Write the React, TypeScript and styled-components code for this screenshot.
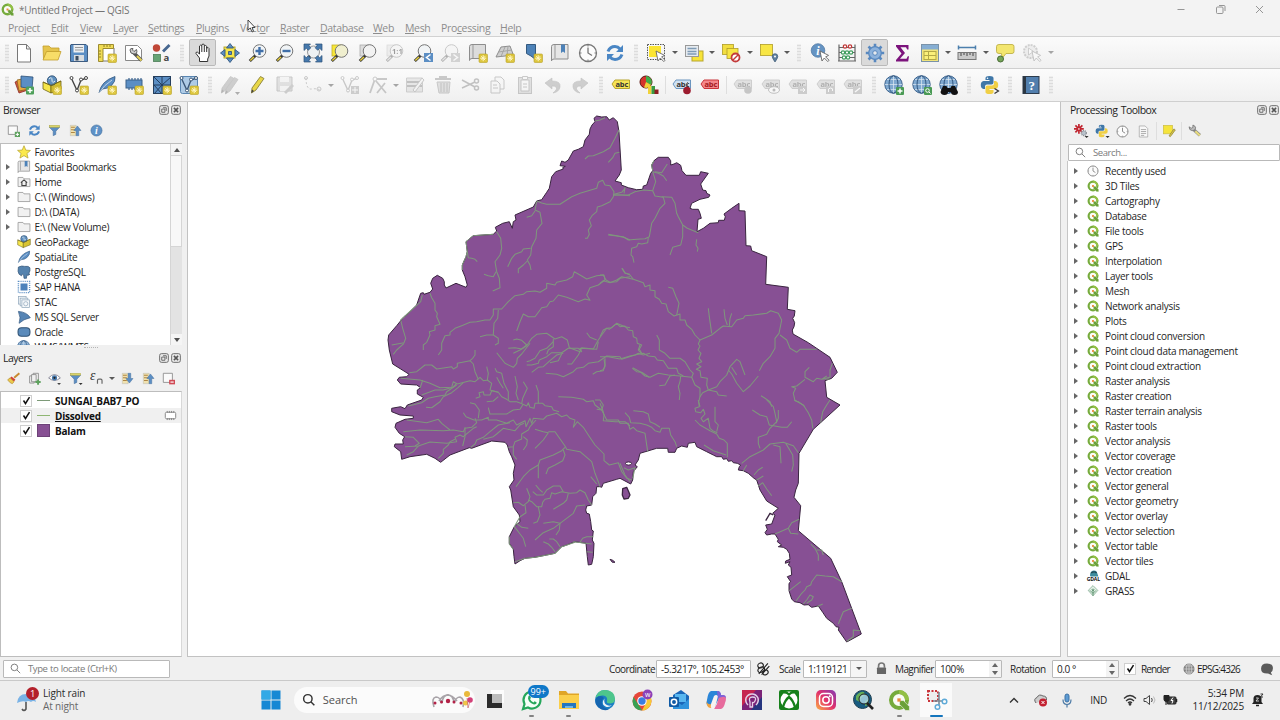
import type { ReactNode } from "react";
import styled, { createGlobalStyle, css } from "styled-components";

const GlobalStyle = createGlobalStyle`
  * {
    box-sizing: border-box;
  }
  body {
    margin: 0;
    overflow: hidden;
    font-family: "Open Sans", "Noto Sans", sans-serif;
    font-size: 10px;
    color: #1e1e1e;
  }
  svg {
    display: block;
    flex: none;
  }
`;

const Screen = styled.div`
  width: 1280px;
  height: 720px;
  display: flex;
  flex-direction: column;
  background-color: #f0f0f0;
  position: relative;
`;

const TitleBar = styled.header`
  height: 19px;
  display: flex;
  align-items: center;
  padding-left: 1px;
  background-color: #f3f3f3;
  color: #747474;
`;

const WindowTitle = styled.span`
  flex: 1;
  margin-left: 5px;
  font-size: 10px;
  letter-spacing: -0.26px;
`;

const WindowButtons = styled.div`
  display: flex;
  gap: 26px;
  padding-right: 14px;
`;

const MenuBar = styled.nav`
  height: 18px;
  display: flex;
  align-items: center;
  padding-left: 8px;
  background-color: #f3f3f3;
  border-bottom: 1px solid #d2d2d2;
  color: #8d8d8d;
`;

const MenuItem = styled.span<{ $width: number }>`
  width: ${(props) => `${props.$width}px`};
  font-size: 10.5px;
  letter-spacing: -0.34px;
  white-space: nowrap;
  u {
    text-underline-offset: 1px;
    text-decoration-thickness: 1px;
  }
`;

const Toolbar = styled.div<{ $height: number }>`
  height: ${(props) => `${props.$height}px`};
  display: flex;
  align-items: center;
  padding-left: 3px;
  background: linear-gradient(#fbfbfb, #f0f0f0);
  border-bottom: 1px solid #cfcfcf;
`;

const Handle = styled.div<{ $width?: number }>`
  width: ${(props) => `${props.$width ?? 13}px`};
  height: 18px;
  flex: none;
  display: flex;
  justify-content: center;
  &::before {
    content: "";
    width: 4px;
    background-image: radial-gradient(#dcdcdc 0.7px, transparent 0.9px);
    background-size: 2px 3px;
  }
`;

const Separator = styled.div<{ $width?: number }>`
  width: ${(props) => `${props.$width ?? 6}px`};
  height: 18px;
  flex: none;
  background: linear-gradient(#dedede, #dedede) center / 1px 100% no-repeat;
`;

const ToolButton = styled.div<{ $pressed?: boolean; $disabled?: boolean }>`
  width: 27.5px;
  height: 27px;
  flex: none;
  display: flex;
  align-items: center;
  justify-content: center;
  ${(props) =>
    props.$pressed &&
    css`
      background-color: #dadada;
      border: 1px solid #b9b9b9;
      border-radius: 2px;
      background-clip: padding-box;
    `}
  ${(props) =>
    props.$disabled &&
    css`
      opacity: 0.36;
      filter: grayscale(1);
    `}
`;

const DropArrow = styled.div<{ $faded?: boolean }>`
  width: 10px;
  flex: none;
  display: flex;
  justify-content: center;
  &::before {
    content: "";
    border: 3px solid transparent;
    border-top: 3.5px solid ${(props) => (props.$faded ? "#a5a5a5" : "#5a5a5a")};
    border-bottom: 0;
  }
`;

const Workspace = styled.main`
  height: 555px;
  display: flex;
`;

const LeftDock = styled.aside`
  width: 182px;
  display: flex;
  flex-direction: column;
`;

const RightDock = styled.aside`
  width: 213px;
  display: flex;
  flex-direction: column;
`;

const Splitter = styled.div<{ $width: number }>`
  width: ${(props) => `${props.$width}px`};
  flex: none;
`;

const PanelHeader = styled.div`
  height: 16px;
  display: flex;
  align-items: center;
  gap: 2px;
  padding: 0 1px 0 3px;
`;

const PanelTitle = styled.span`
  flex: 1;
  font-size: 10.5px;
  letter-spacing: -0.52px;
  word-spacing: 1px;
`;

const PanelTools = styled.div<{ $left: number; $height: number }>`
  height: ${(props) => `${props.$height}px`};
  display: flex;
  align-items: center;
  padding-left: ${(props) => `${props.$left}px`};
`;

const PanelTool = styled.div<{ $width?: number }>`
  width: ${(props) => `${props.$width ?? 21}px`};
  flex: none;
  display: flex;
  justify-content: center;
  align-items: center;
`;

const BrowserBody = styled.div`
  height: 202px;
  display: flex;
  background-color: #fff;
  border-top: 1px solid #bdbdbd;
  border-left: 1px solid #bdbdbd;
  overflow: hidden;
`;

const Tree = styled.div`
  flex: 1;
  overflow: hidden;
`;

const TreeRow = styled.div<{ $left: number; $toggle: number }>`
  height: 15px;
  display: flex;
  align-items: center;
  padding-left: ${(props) => `${props.$left}px`};
  > i {
    width: ${(props) => `${props.$toggle}px`};
  }
`;

const Toggle = styled.i<{ $closed?: boolean }>`
  flex: none;
  height: 6px;
  &::before {
    content: "";
    display: block;
    width: 0;
    border: 3px solid transparent;
    border-left: 4px solid ${(props) => (props.$closed ? "#666" : "transparent")};
    border-right: 0;
  }
`;

const RowLabel = styled.span<{ $left?: number }>`
  margin-left: ${(props) => `${props.$left ?? 4}px`};
  font-size: 10px;
  letter-spacing: -0.29px;
  white-space: nowrap;
`;

const ScrollBar = styled.div`
  width: 12px;
  display: flex;
  flex-direction: column;
  background-color: #e3e3e3;
  border-left: 1px solid #d5d5d5;
`;

const ScrollArrow = styled.div<{ $down?: boolean }>`
  height: 11px;
  display: flex;
  align-items: center;
  justify-content: center;
  background-color: #f5f5f5;
  &::before {
    content: "";
    border: 3px solid transparent;
    border-bottom: 4px solid #4f4f4f;
    border-top: 0;
    transform: ${(props) => (props.$down ? "rotate(180deg)" : "none")};
  }
`;

const ScrollThumb = styled.div`
  height: 92px;
  background-color: #f8f8f8;
  border: 1px solid #d5d5d5;
  border-left: 0;
`;

const ScrollTrack = styled.div`
  flex: 1;
`;

const DockGrip = styled.div`
  height: 5px;
  display: flex;
  justify-content: center;
  align-items: center;
  &::before {
    content: "";
    width: 14px;
    border-top: 1px dotted #b5b5b5;
  }
`;

const LayerList = styled.div`
  flex: 1;
  padding-top: 1px;
  background-color: #fff;
  border: 1px solid #bdbdbd;
  border-right-color: #d8d8d8;
`;

const LayerRow = styled.div<{ $active?: boolean }>`
  height: 15px;
  display: flex;
  align-items: center;
  padding: 0 4px 0 19px;
  font-size: 10px;
  font-weight: 700;
  letter-spacing: -0.2px;
  color: #111;
  background-color: ${(props) => (props.$active ? "#f0f0f0" : "transparent")};
`;

const LayerName = styled.span<{ $active?: boolean }>`
  flex: 1;
  margin-left: 5px;
  text-decoration: ${(props) => (props.$active ? "underline" : "none")};
`;

const CheckBox = styled.div`
  width: 12px;
  height: 12px;
  margin-right: 5px;
  flex: none;
  display: flex;
  align-items: center;
  justify-content: center;
  background-color: #fff;
  border: 1px solid #cfcfcf;
`;

const Swatch = styled.div<{ $line?: string }>`
  width: 13px;
  flex: none;
  ${(props) =>
    props.$line
      ? css`
          height: 1px;
          background-color: ${props.$line};
        `
      : css`
          height: 13px;
          background-color: #875093;
          border: 1px solid #6d4278;
        `}
`;

const Canvas = styled.section`
  width: 874px;
  flex: none;
  background-color: #fff;
  border: 1px solid #c2c2c2;
  border-top: 0;
`;

const SearchBox = styled.div<{ $height: number; $width?: number }>`
  width: ${(props) => (props.$width ? `${props.$width}px` : "auto")};
  height: ${(props) => `${props.$height}px`};
  display: flex;
  align-items: center;
  gap: 7px;
  padding-left: 6px;
  margin-left: 1px;
  background-color: #fff;
  border: 1px solid #b9b9b9;
  border-radius: 1px;
  color: #7a7a7a;
  font-size: 9.5px;
  letter-spacing: -0.42px;
  word-spacing: 0.5px;
`;

const ToolTree = styled.div`
  flex: 1;
  padding-top: 2px;
  background-color: #fff;
  border-left: 1px solid #c6c6c6;
  border-bottom: 1px solid #c6c6c6;
`;

const StatusBar = styled.footer`
  height: 24px;
  display: flex;
  align-items: center;
  padding-left: 2px;
  border-bottom: 1px solid #c9c9c9;
  background-color: #f0f0f0;
`;

const StatusText = styled.span<{ $width: number; $spacing?: number }>`
  width: ${(props) => `${props.$width}px`};
  flex: none;
  font-size: 10px;
  letter-spacing: ${(props) => `${props.$spacing ?? -0.5}px`};
  white-space: nowrap;
`;

const Field = styled.div<{ $width: number }>`
  width: ${(props) => `${props.$width}px`};
  height: 18px;
  flex: none;
  display: flex;
  align-items: center;
  justify-content: space-between;
  padding-left: 4px;
  background-color: #fff;
  border: 1px solid #b9b9b9;
  border-radius: 1px;
  font-size: 10px;
  letter-spacing: -0.42px;
  white-space: nowrap;
`;

const Spin = styled.div`
  width: 12px;
  height: 16px;
  display: flex;
  flex-direction: column;
  align-items: center;
  justify-content: center;
  gap: 4px;
  background-color: #f3f3f3;
  &::before,
  &::after {
    content: "";
    border: 3px solid transparent;
    border-bottom: 4px solid #666;
    border-top: 0;
  }
  &::after {
    transform: rotate(180deg);
  }
`;

const ComboArrow = styled.div`
  height: 16px;
  width: 16px;
  display: flex;
  align-items: center;
  justify-content: center;
  background-color: #f5f5f5;
  border-left: 1px solid #c9c9c9;
`;

const StatusCell = styled.div<{ $width: number }>`
  width: ${(props) => `${props.$width}px`};
  flex: none;
  display: flex;
  justify-content: center;
`;

const TaskBar = styled.div`
  height: 39px;
  display: flex;
  align-items: center;
  padding-bottom: 1px;
  background-color: #eeeeee;
`;

const Weather = styled.div`
  width: 253px;
  display: flex;
  align-items: center;
  gap: 3px;
  padding: 0 0 1px 15px;
`;

const WeatherText = styled.div`
  display: flex;
  flex-direction: column;
  font-size: 10px;
  line-height: 13px;
  letter-spacing: -0.15px;
  color: #2b2b2b;
  span + span {
    color: #686868;
  }
`;

const TaskCell = styled.div<{ $active?: boolean; $mark?: string }>`
  width: 36.75px;
  height: 36px;
  flex: none;
  display: flex;
  align-items: center;
  justify-content: center;
  position: relative;
  background: ${(props) =>
    props.$active
      ? "linear-gradient(#fafafa, #fafafa) center / 32px 34px no-repeat"
      : "none"};
  &::after {
    content: "";
    position: absolute;
    bottom: 1px;
    height: 2px;
    border-radius: 2px;
    width: ${(props) => (props.$active ? "13px" : props.$mark ? "5px" : "0")};
    background-color: ${(props) => props.$mark ?? "transparent"};
  }
`;

const Badge = styled.span`
  position: absolute;
  left: 14px;
  top: 3px;
  height: 13px;
  padding: 0 3px;
  border-radius: 7px;
  background-color: #0f78c8;
  color: #fff;
  font-size: 9px;
  line-height: 13px;
`;

const TaskSearch = styled.div`
  width: 181px;
  height: 26px;
  margin: 0 2px 0 4px;
  flex: none;
  display: flex;
  align-items: center;
  gap: 8px;
  padding: 0 2px 1px 8px;
  border-radius: 13px;
  background-color: #fbfbfb;
  font-size: 11px;
  color: #505050;
  span {
    flex: 1;
  }
`;

const Tray = styled.div`
  flex: 1;
  display: flex;
  align-items: center;
  justify-content: flex-end;
  padding-right: 16px;
`;

const TrayCell = styled.div<{ $width: number }>`
  width: ${(props) => `${props.$width}px`};
  display: flex;
  justify-content: center;
  font-size: 10px;
  letter-spacing: -0.3px;
`;

const Clock = styled.div`
  width: 60px;
  margin-right: 7px;
  text-align: right;
  font-size: 10px;
  line-height: 13px;
  letter-spacing: -0.15px;
  color: #252525;
`;

const Pointer = styled.div`
  position: absolute;
  left: 247px;
  top: 19px;
`;

/* ---------- icons, drawn on a 20 x 20 grid ---------- */

const BLUE = "#5b8ec4";

const NewBadge = () => (
  <g>
    <rect x="11" y="11" width="8.500" height="8.500" rx="1" fill="#dcc53b" stroke="#b9a12a" strokeWidth=".6" />
    <path d="M15.200 12.200v6M12.200 15.200h6M13.200 13.200l4 4M17.200 13.200l-4 4" stroke="#fff6c4" strokeWidth="1" />
  </g>
);

const Lens = ({ fill = "#f1f4f6" }: { fill?: string }) => (
  <g>
    <path d="M7.500 12.500L1.800 18" stroke="#333" strokeWidth="3" />
    <path d="M6 14L2.300 17.500" stroke="#e6cf3e" strokeWidth="1.600" />
    <circle cx="11.500" cy="8" r="6.300" fill={fill} stroke="#777" />
  </g>
);

const Cursor = () => <path d="M10 8l2 10 2.300-3 3.500 3.600 1.300-1.400-3.500-3.300 3-1.500z" fill="#fff" stroke="#666" strokeWidth=".9" />;

const Globe = () => (
  <g>
    <circle cx="9.500" cy="9.500" r="8.700" fill="#7fa8cf" stroke="#3d638d" />
    <path d="M9.500 1v17M1 9.500h17M3 4.500h13M3 14.500h13" stroke="#dfe9f2" strokeWidth=".7" />
    <ellipse cx="9.500" cy="9.500" rx="4.500" ry="8.700" fill="none" stroke="#31567f" />
  </g>
);

const Tag = ({ fill, stroke, ink = "#333" }: { fill: string; stroke: string; ink?: string }) => (
  <g>
    <path d="M1 9l3-4h14.500v8.500H4z" fill={fill} stroke={stroke} />
    <text x="4.500" y="11.600" fontSize="7.500" fontWeight="700" fill={ink} fontFamily="Open Sans, sans-serif" letterSpacing="-.2">
      abc
    </text>
  </g>
);

const Snake = ({ fill }: { fill: string }) => (
  <path d="M5.500 3q0-2 4-2t4 2v4.500q0 2-2 2H7q-2 0-2 2V14H3.500Q.8 13.500.8 10t2.700-4h6V5h-4z" fill={fill} />
);

const Python = () => (
  <g>
    <Snake fill="#3f77a8" />
    <g transform="rotate(180 9.500 10)">
      <Snake fill="#f0cf45" />
    </g>
    <circle cx="7.500" cy="3.200" r=".8" fill="#fff" />
  </g>
);

const VectorNodes = ({ color = "#555" }: { color?: string }) => (
  <g stroke={color} fill="#fff">
    <path d="M2.500 3.500L8 15.500 12 5l4.500-1.500" fill="none" strokeWidth="1.400" />
    <circle cx="2.500" cy="3" r="1.500" />
    <circle cx="8" cy="15.500" r="1.500" />
    <circle cx="12" cy="4.500" r="1.500" />
    <circle cx="17" cy="3" r="1.500" />
  </g>
);

const Pencil = ({ fill = "#e8d748" }: { fill?: string }) => (
  <g>
    <path d="M4 13L12.500 1.500l3.500 2L8 15l-4.500 3z" fill={fill} stroke="#7d742e" strokeWidth=".8" />
    <path d="M4 14.500l2 1.500-2.800 2z" fill="#444" />
  </g>
);

const Box = () => (
  <g>
    <path d="M1 7l8 3.500V18L1 14z" fill="#f6e64b" stroke="#6e6315" strokeWidth=".8" />
    <path d="M9 10.500L19 6v8L9 18z" fill="#d8c330" stroke="#6e6315" strokeWidth=".8" />
    <circle cx="10" cy="5.500" r="4.700" fill="#5e8fbe" stroke="#2b4a6c" strokeWidth=".8" />
    <path d="M7 4q3-3 3 1t3 1" stroke="#e3edf4" fill="none" />
    <path d="M1 7l8 3.500L19 6" fill="none" stroke="#6e6315" strokeWidth=".8" />
  </g>
);

const Feather = () => (
  <g>
    <path d="M2 18Q4 6 18 1.500q1 5-4 9.500-3 2.500-8.500 3z" fill={BLUE} stroke="#35597f" strokeWidth=".8" />
    <path d="M2 18Q7 10 15 5" stroke="#dbe6f0" fill="none" strokeWidth=".8" />
  </g>
);

const Refresh = () => (
  <g fill="none" stroke="#4a86c4" strokeWidth="3">
    <path d="M3 8.500Q5 3.500 10 3.500q3 0 5 2.500" />
    <path d="M17 11.500Q15 16.500 10 16.500q-3 0-5-2.500" />
    <path d="M18 2v7h-7zM2 18v-7h7z" fill="#4a86c4" stroke="none" />
  </g>
);

const Clk = () => (
  <g fill="none" stroke="#777">
    <circle cx="10" cy="10" r="8.500" fill="#fcfcfc" strokeWidth="1.300" />
    <path d="M10 4.500V10l4 2.500" strokeWidth="1.300" />
    <path d="M10 2v1.500M10 16.500V18M2 10h1.500M16.500 10H18" />
  </g>
);

const Funnel = () => (
  <g>
    <path d="M2 5l6 6v7l4-2v-5l6-6z" fill={BLUE} stroke="#456f9b" strokeWidth=".8" />
    <rect x="2" y="2" width="16" height="3" fill="#d9d36a" stroke="#a39c35" strokeWidth=".6" />
  </g>
);

const ArrowTree = ({ down }: { down?: boolean }) => (
  <g>
    <path d="M2 2h9v16H2z" fill="#f0e2b0" stroke="#aaa" strokeWidth=".6" />
    <path d="M3 5h6M3 9h6M3 13h6" stroke="#b08745" strokeWidth="1.600" />
    <path d={down ? "M11 2h4v8h3.500L13 17 7.500 10H11z" : "M11 18h4v-8h3.500L13 3 7.500 10H11z"} fill={BLUE} stroke="#3f6a98" strokeWidth=".7" />
  </g>
);

const Folder = () => <path d="M1.500 3.500h7l1.500 2h8.500v11h-17z" fill="#f1f1f1" stroke="#9b9b9b" strokeWidth="1.200" />;

const QLogo = () => (
  <g>
    <circle cx="10" cy="10" r="7.300" fill="#fbfcf6" stroke="#76ab3c" strokeWidth="3.600" />
    <path d="M10 2.700a7.300 7.300 0 0 1 7.300 7.300" fill="none" stroke="#93c045" strokeWidth="3.600" />
    <path d="M10.500 10.500h3.500l5.500 5.500v3.500H16l-5.500-5.500z" fill="#6aa038" stroke="#fbfcf6" strokeWidth=".5" />
    <path d="M8.500 8.500h3v3h-3z" fill="#e98a3c" />
  </g>
);

const Square = ({ x, y, fill }: { x: number; y: number; fill: string }) => (
  <rect x={x} y={y} width="11" height="10" fill={fill} stroke="#b09d26" strokeWidth=".8" />
);

const icons: Record<string, ReactNode> = {
  newFile: <path d="M3.500 1.500h9l4 4.500v13h-13zM12.500 1.500V6h4" fill="#fff" stroke="#777" />,
  open: (
    <g stroke="#c39e2c" strokeWidth=".8">
      <path d="M1 3h6l2 2h8v4H5L1.500 16z" fill="#e5c44c" />
      <path d="M4.500 8.500H19L16 17H1z" fill="#f8dd68" />
    </g>
  ),
  save: (
    <g>
      <path d="M2 1.500h15l1.500 1.500v15.500H1.500V2z" fill={BLUE} stroke="#3e5c80" />
      <rect x="4.500" y="2" width="10.500" height="7.500" fill="#eceff2" />
      <path d="M6 4.500h8M6 7h8" stroke="#999" />
      <rect x="5" y="12" width="10" height="6" fill="#d8dce0" />
      <rect x="6.500" y="13" width="3" height="4.500" fill="#3c4d60" />
    </g>
  ),
  layout: (
    <g>
      <path d="M4 5h13v13H4z" fill="#fff" stroke="#777" />
      <path d="M1.500 1.500h15v4H6v13H1.500z" fill="#f0dc55" stroke="#9c8b30" />
      <path d="M7 2v2M10 2v2M13 2v2M2 8h2M2 11h2M2 14h2" stroke="#76691f" strokeWidth=".8" />
      <NewBadge />
    </g>
  ),
  layoutManager: (
    <g>
      <path d="M1.500 2.500h12l4 4v11h-16z" fill="#fff" stroke="#888" />
      <path d="M9.500 9.500l8 8" stroke="#555" strokeWidth="3.400" />
      <path d="M13 13l4.500 4.500" stroke="#e5d154" strokeWidth="2" />
      <path d="M6 7q0 4 4 4t2.500-4.500L10 8.500 8.500 7 9 5.500Q6 5 6 7" fill="#ccc" stroke="#555" strokeWidth=".9" />
    </g>
  ),
  style: (
    <g>
      <circle cx="4.500" cy="5" r="3.700" fill="#c04737" />
      <path d="M11 8.500L17.500 2" stroke="#46668f" strokeWidth="2.800" />
      <rect x="1.500" y="11.500" width="7" height="7" fill="#67a374" stroke="#4c7e58" strokeWidth=".8" />
      <text x="11.500" y="17.500" fontSize="9.500" fontWeight="700" fill="#444" fontFamily="Open Sans, sans-serif">a</text>
    </g>
  ),
  hand: (
    <path
      d="M6.500 18.500V15L3 10.500q-.5-1.700 1.500-1.300L6.500 11V3q1.200-1.800 2.300 0V1.700q1.300-1.400 2.500 0V3q1.200-1.200 2.400.3V5q1.800-1 2.300.5V13l-1.300 3v2.500zM8.800 3v6M11.300 3v6M13.700 4v5"
      fill="#fff"
      stroke="#333"
    />
  ),
  panSelection: (
    <g>
      <rect x="4" y="4" width="11" height="11" fill="#f5e548" stroke="#b7a62c" />
      <path d="M10 .5l3.500 4.500h-7zM10 19.500L6.500 15h7zM.5 10L5 6.500v7zM19.500 10L15 6.500v7zM8.500 8.500h3v3h-3z" fill={BLUE} stroke="#34587f" strokeWidth=".9" />
    </g>
  ),
  zoomIn: (
    <g>
      <Lens />
      <path d="M11.500 4v8M7.500 8h8" stroke="#3f6ea8" strokeWidth="2.400" />
    </g>
  ),
  zoomOut: (
    <g>
      <Lens />
      <path d="M7.500 8h8" stroke="#3f6ea8" strokeWidth="2.400" />
    </g>
  ),
  zoomFull: (
    <g>
      <circle cx="10.500" cy="9" r="6" fill="#eef1f3" stroke="#999" />
      <path d="M7 13l-5 5" stroke="#444" strokeWidth="2.500" />
      <path d="M1 1h6.500L5.800 2.800l2 2-2.500 2.500-2-2L1 7.500zM19 1v6.500l-2.300-2.200-2 2-2.500-2.500 2-2L12.500 1zM1 19v-6.500l2.300 2.200 2-2 2.500 2.500-2 2L7.500 19zM19 19h-6.500l1.700-1.800-2-2 2.500-2.500 2 2 2.300-2.200z" fill="#4679ad" stroke="#2d517a" strokeWidth=".7" />
    </g>
  ),
  zoomSelection: (
    <g>
      <rect x="2" y="2" width="10" height="11" fill="#f7e737" stroke="#c2b02b" strokeWidth=".8" />
      <Lens fill="#f0efcf" />
    </g>
  ),
  zoomLayer: (
    <g>
      <rect x="2" y="2" width="10" height="11" fill="#ddd" stroke="#aaa" strokeWidth=".8" />
      <Lens fill="#f2f2f2" />
    </g>
  ),
  zoomNative: (
    <g>
      <rect x="2" y="2" width="10" height="11" fill="#ddd" stroke="#aaa" strokeWidth=".8" />
      <Lens />
      <text x="7" y="11" fontSize="7.500" fontWeight="700" fontFamily="Open Sans, sans-serif">1:1</text>
    </g>
  ),
  zoomLast: (
    <g>
      <Lens />
      <rect x="11" y="10" width="9" height="9" fill={BLUE} />
      <path d="M17.500 11.500l-4 3 4 3" stroke="#fff" fill="none" strokeWidth="1.500" />
    </g>
  ),
  zoomNext: (
    <g>
      <Lens />
      <rect x="11" y="10" width="9" height="9" fill="#999" />
      <path d="M13.500 11.500l4 3-4 3" stroke="#fff" fill="none" strokeWidth="1.500" />
    </g>
  ),
  mapView: (
    <g>
      <path d="M1.500 3.500Q1.500 1.500 4 1.500h13.500v14H4q-2.500 0-2.500 2z" fill="#dcdcdc" stroke="#8d8d8d" />
      <path d="M5 2v13" stroke="#999" />
      <NewBadge />
    </g>
  ),
  view3d: (
    <g>
      <path d="M6 4l9-1 3 8-8 2-9 1z" fill="#cfcfcf" stroke="#8d8d8d" />
      <path d="M10 4L6 13.500M13 3.500l-1 9M3.500 9l13.500-2" stroke="#a5a5a5" />
      <NewBadge />
    </g>
  ),
  newBookmark: (
    <g>
      <path d="M3.500 1.500h9v15l-4.500-3.500-4.500-2.500z" fill="#4d82b8" stroke="#33597f" />
      <NewBadge />
    </g>
  ),
  bookmarks: (
    <g>
      <path d="M1.500 3.500Q1.500 1.500 4 1.500h14v14.500H4q-2.500 0-2.500 2z" fill="#e6e6e6" stroke="#8d8d8d" />
      <path d="M5 2v13" stroke="#999" />
      <path d="M11 1.500h4V10l-2-1.500L11 10z" fill="#4d82b8" />
    </g>
  ),
  clock: <Clk />,
  refresh: <Refresh />,
  select: (
    <g>
      <rect x="1.500" y="1.500" width="17" height="15" fill="none" stroke="#555" strokeDasharray="1.500 1" />
      <rect x="3" y="3" width="12" height="11" fill="#fbe533" />
      <Cursor />
    </g>
  ),
  selectForm: (
    <g>
      <rect x="8" y="8" width="11" height="10" fill="#f7e338" stroke="#b7a62c" />
      <rect x="1.500" y="2.500" width="13" height="11" fill="#e6ebf0" stroke="#999" />
      <path d="M3.500 5.500h9M3.500 8.500h9M3.500 11h9" stroke="#7f9bb5" strokeWidth="1.500" />
    </g>
  ),
  deselect: (
    <g>
      <Square x={1.5} y={1.5} fill="#f2de41" />
      <Square x={6} y={5.5} fill="#f8e645" />
      <circle cx="14.500" cy="14.500" r="4" fill="#fff" stroke="#c33a3a" strokeWidth="1.800" />
      <path d="M12 17l5-5" stroke="#c33a3a" strokeWidth="1.500" />
    </g>
  ),
  selectPlace: (
    <g>
      <rect x="1.500" y="1.500" width="12" height="11" fill="#f8e645" stroke="#b09d26" strokeWidth=".8" />
      <path d="M16 19q-2.800-4-2.800-5.500a2.800 2.800 0 0 1 5.600 0Q18.800 15 16 19" fill="#5f7f9e" stroke="#3f5b76" strokeWidth=".7" />
      <circle cx="16" cy="13.500" r="1" fill="#fff" />
    </g>
  ),
  identify: (
    <g>
      <circle cx="8" cy="7.500" r="6.800" fill="#6593c2" stroke="#46719d" strokeWidth=".7" />
      <text x="6.200" y="12" fontSize="12" fontStyle="italic" fontWeight="700" fill="#fff" fontFamily="Liberation Serif, serif">i</text>
      <Cursor />
    </g>
  ),
  abacus: (
    <g>
      <path d="M2 1.500v17M18 1.500v17M1 18h18M2 4.500h16M2 9.500h16M2 14.500h16" stroke="#666" strokeWidth="1.200" />
      <g fill="#fff" strokeWidth="1.200">
        <g stroke="#c03838"><circle cx="8" cy="3.500" r="1.700" /><circle cx="13" cy="3.500" r="1.700" /></g>
        <g stroke="#3f9d5e"><circle cx="6" cy="9.500" r="1.700" /><circle cx="10" cy="9.500" r="1.700" /><circle cx="14" cy="9.500" r="1.700" /><circle cx="7" cy="14.500" r="1.700" /><circle cx="11" cy="14.500" r="1.700" /></g>
      </g>
    </g>
  ),
  gear: (
    <g>
      <path d="M10 .8v18.400M.8 10h18.400M3.500 3.500l13 13M16.500 3.500l-13 13" stroke="#5888bf" strokeWidth="2.600" />
      <circle cx="10" cy="10" r="6.300" fill="#8db2dc" stroke="#5888bf" strokeWidth="1.300" />
      <circle cx="10" cy="10" r="2.300" fill="#e6e9ee" stroke="#5888bf" />
    </g>
  ),
  sigma: <path d="M4 2h12.500v4.500h-1.300L14 4.300H8.500L13 10l-5 5.800h6.500l1.300-2.500H17L16.200 18.500H4V17l5.500-6.500L4 3.500z" fill="#7c137c" />,
  table: (
    <g>
      <rect x="1.500" y="1.500" width="17" height="17" fill="#f0e47c" stroke="#7b93a8" />
      <rect x="2" y="2" width="16" height="4.500" fill="#86aed3" />
      <rect x="4" y="8.500" width="12" height="8" fill="#faf07a" stroke="#b3a947" />
      <path d="M4 12.500h12M8.500 8.500v8" stroke="#b3a947" />
    </g>
  ),
  measure: (
    <g>
      <path d="M1.500 4.500h17M1.500 2.500v4M18.500 2.500v4" stroke="#4c7fad" strokeWidth="1.500" />
      <rect x="1" y="9.500" width="18" height="7" fill="#c9c9c9" stroke="#777" />
      <path d="M4 10v3M7 10v2M10 10v3M13 10v2M16 10v3" stroke="#444" />
    </g>
  ),
  tip: (
    <g>
      <path d="M4 1.500h13q2 0 2 2v5q0 2-2 2h-6l-4 5-.5-5H4q-2.500 0-2.500-2v-5q0-2 2.500-2" fill="#f3e66f" stroke="#b9aa3a" strokeWidth=".8" />
      <circle cx="5.500" cy="16" r="3" fill="#75a558" stroke="#496c36" />
    </g>
  ),
  action: (
    <g>
      <circle cx="8.500" cy="8.500" r="6.500" fill="#ddd" stroke="#888" strokeWidth="2" strokeDasharray="2 1" />
      <path d="M6.500 5l5 3.500-5 3.500z" fill="#fff" stroke="#888" />
      <Cursor />
    </g>
  ),
  dataSource: (
    <g strokeWidth=".8">
      <path d="M1 7l9-3 4 11-9 3z" fill="#d0583f" stroke="#8d2c27" />
      <path d="M3 5l10-2 2 11-10 2z" fill="#e9a93c" stroke="#906420" />
      <path d="M7 1l12 1-1 12-11-2z" fill={BLUE} stroke="#2c4f76" />
      <rect x="12" y="11.500" width="8" height="8" rx="1" fill="#4fa05a" stroke="none" />
      <path d="M16 13v5M13.500 15.500h5" stroke="#fff" strokeWidth="1.500" />
    </g>
  ),
  geopackage: (<g><Box /><NewBadge /></g>),
  shapefile: (<g><VectorNodes color="#444" /><NewBadge /></g>),
  spatialite: (<g><Feather /><NewBadge /></g>),
  memory: (
    <g>
      <path d="M5 3v12M8 3v12M11 3v12M14 3v12M17 3v12" stroke="#4b7099" strokeWidth="1.300" />
      <rect x="2" y="5" width="16" height="8" fill={BLUE} stroke="#3a6189" />
      <NewBadge />
    </g>
  ),
  mesh: (
    <g>
      <rect x="1.500" y="1.500" width="17" height="17" fill={BLUE} stroke="#253f5e" />
      <path d="M2 10h17M10 2v17M2 2l8 8 9-8M2 19l8-9 4 4M2 10l8 9" stroke="#253f5e" fill="none" />
      <NewBadge />
    </g>
  ),
  virtual: (
    <g>
      <rect x="1.500" y="1.500" width="17" height="17" rx="2" fill="#aecbe6" stroke="#5a86b2" />
      <VectorNodes color="#3c5878" />
      <NewBadge />
    </g>
  ),
  edits: (<g><g transform="translate(-2 0)"><Pencil fill="#888" /></g><g transform="translate(2 1)"><Pencil fill="#888" /></g><path d="M15 17h5l-2.500 3z" fill="#333" /></g>),
  pencil: <Pencil />,
  saveEdits: (<g><path d="M2 2h15v14H2z" fill="#bbb" stroke="#777" /><path d="M5 2h9v5H5zM5 11h9v5H5z" fill="#eee" /><path d="M9 17l8-8 2 2-8 8z" fill="#888" /></g>),
  digitize: (<g fill="none" stroke="#777"><path d="M3 3q0 12 6 11t9 2" strokeDasharray="2 2" /><circle cx="3" cy="3" r="1.500" /><circle cx="16" cy="14" r="2" /></g>),
  addFeature: (<g><VectorNodes color="#777" /><rect x="11" y="11" width="8" height="8" fill="#888" /><path d="M15 12v6M12 15h6" stroke="#fff" /></g>),
  vertex: (<g><path d="M2 18L7 4h12M8 6l10 12M17 8l-8 10" fill="none" stroke="#777" strokeWidth="1.800" /><circle cx="7" cy="4" r="2" fill="#fff" stroke="#777" /></g>),
  attributes: (<g><path d="M1.500 3h16v14h-16z" fill="#ccc" stroke="#888" /><path d="M2 7h15M2 11h15" stroke="#666" strokeWidth="2" /><path d="M8 15L17 3l2 2-9 12z" fill="#eee" stroke="#777" /></g>),
  trash: (<g><path d="M2 4h16M6 2h8" stroke="#777" strokeWidth="2" /><path d="M4 7h13l-1 11H6z" fill="#bbb" stroke="#777" /><path d="M8 8v9M11 8v9M14 8v9" stroke="#666" /></g>),
  cut: (<g fill="none" stroke="#666" strokeWidth="1.500"><path d="M2 5l13 7M2 13l13-6" /><circle cx="16.500" cy="6" r="2" /><circle cx="16.500" cy="13" r="2" /></g>),
  copy: (<g fill="#f5f5f5" stroke="#777"><path d="M7 2h6l3 3v9H7z" /><path d="M3 6h6l3 3v9H3z" /><path d="M5 10h4M5 13h5" /></g>),
  paste: (<g fill="#f5f5f5" stroke="#777"><rect x="3.500" y="2.500" width="13" height="16" fill="#bbb" /><path d="M6 5h8v11H6z" /><path d="M7.500 1.500h5v3h-5zM8 9h4M8 12h4" /></g>),
  undo: <path d="M2 8l7-5v3q9 0 8 6-1 5-7 6 5-4 3-6-1-1-4-1v3z" fill="#888" stroke="#666" strokeWidth=".6" />,
  redo: <path d="M18 8l-7-5v3q-9 0-8 6 1 5 7 6-5-4-3-6 1-1 4-1v3z" fill="#888" stroke="#666" strokeWidth=".6" />,
  labelYellow: <Tag fill="#f6e353" stroke="#b7a52f" />,
  diagram: (
    <g>
      <circle cx="7" cy="7" r="6" fill="#d3352d" stroke="#5c1512" />
      <path d="M7 7V1a6 6 0 0 1 5 9z" fill="#3fae49" />
      <path d="M7 7l5 3a6 6 0 0 1-7 2.500z" fill="#f0d23b" />
      <path d="M9 11h3.500v8H9z" fill="#f0d23b" /><path d="M12.500 11h3.500v8h-3.500z" fill="#3a9a43" /><path d="M15.500 14.500h4v4.500h-4z" fill="#8e1f22" />
    </g>
  ),
  labelPin: (<g><Tag fill="#cfe1f3" stroke="#6a95bf" /><circle cx="15" cy="15.500" r="3.800" fill="#9c1b2e" /><path d="M15.500 11V7" stroke="#777" /></g>),
  labelRed: <Tag fill="#f4878b" stroke="#c9343a" ink="#a31820" />,
  labelA: (<g><Tag fill="#bbb" stroke="#888" /><circle cx="15" cy="15" r="3.800" fill="#777" /></g>),
  labelB: (<g><Tag fill="#bbb" stroke="#888" /><ellipse cx="13" cy="15" rx="5.500" ry="3.300" fill="#fff" stroke="#666" /><circle cx="13" cy="15" r="1.500" fill="#555" /></g>),
  labelC: (<g><Tag fill="#bbb" stroke="#888" /><rect x="10" y="11" width="9" height="8" fill="#888" /><path d="M12 15h5l-2-2m2 2l-2 2" stroke="#fff" fill="none" /></g>),
  labelD: (<g><Tag fill="#bbb" stroke="#888" /><rect x="10" y="11" width="9" height="8" fill="#888" /><path d="M12.500 17q-1-4 2-4t2 3" stroke="#fff" fill="none" /></g>),
  labelE: (<g><Tag fill="#bbb" stroke="#888" /><rect x="10" y="11" width="9" height="8" fill="#888" /><path d="M12 17l5-4" stroke="#fff" strokeWidth="1.500" /></g>),
  webAdd: (<g><Globe /><rect x="12" y="12" width="8" height="8" rx="1" fill="#4a9a55" /><path d="M16 13.500v5M13.500 16h5" stroke="#fff" strokeWidth="1.500" /></g>),
  webSearch: (<g><Globe /><rect x="12" y="12" width="8" height="8" rx="1" fill="#4a9a55" /><circle cx="15.500" cy="15.500" r="1.800" fill="none" stroke="#fff" /><path d="M17 17l1.500 1.500" stroke="#fff" /></g>),
  webFind: (
    <g>
      <Globe />
      <path d="M4 11h3.500l1 2h3l1-2H16l3 6q0 3-3.500 3T12 17h-3q0 3-3.500 3T1.500 17z" fill="#111" />
    </g>
  ),
  python: (<g><Python /><path d="M14.500 13.500l4 2.500-4 2.500" fill="none" stroke="#333" strokeWidth="1.200" /></g>),
  pythonSmall: (<g><Python /><path d="M15 17h6l-3 3z" fill="#333" /></g>),
  help: (
    <g>
      <rect x="2" y="1.500" width="16" height="17" fill="#527fae" stroke="#2c3b4c" />
      <path d="M2 1.500h3v17H2z" fill="#2b3642" />
      <text x="7.500" y="15" fontSize="13" fontWeight="700" fill="#fff" fontFamily="Liberation Serif, serif">?</text>
    </g>
  ),
  addLayer: (<g><path d="M2 3h14v13H2z" fill="#fafafa" stroke="#888" strokeWidth="1.300" /><rect x="12" y="12" width="8" height="8" fill="#5fa25f" /><path d="M16 13.500v5M13.500 16h5" stroke="#fff" strokeWidth="1.500" /></g>),
  removeLayer: (<g><path d="M2 2h14v14H2z" fill="#fafafa" stroke="#888" strokeWidth="1.300" /><rect x="11" y="12" width="9" height="7" fill="#d04a55" /><path d="M13 15.500h5" stroke="#fff" strokeWidth="1.800" /></g>),
  filter: <Funnel />,
  layerFilter: (<g><Funnel /><path d="M15 17h6l-3 3z" fill="#333" /></g>),
  collapse: <ArrowTree />,
  expand: <ArrowTree down />,
  info: (
    <g>
      <circle cx="10" cy="10" r="8.500" fill="#5f92c7" stroke="#46719d" />
      <text x="7.600" y="15.500" fontSize="15" fontStyle="italic" fontWeight="700" fill="#fff" fontFamily="Liberation Serif, serif">i</text>
    </g>
  ),
  star: <path d="M10 1l2.600 6.300 6.600.5-5 4.300 1.600 6.600L10 15.200l-5.800 3.500L5.800 12l-5-4.300 6.600-.5z" fill="#fbe94d" stroke="#b29f29" />,
  folder: <Folder />,
  home: (<g><Folder /><path d="M5.500 11l4.500-4 4.500 4M7 10.500V15h6v-4.500" fill="none" stroke="#444" strokeWidth="1.600" /></g>),
  box: <Box />,
  feather: <Feather />,
  elephant: <path d="M2 3q5-2.500 9-1 6-1 7.500 2 1 4-2 9h2l-3 2-1.500-1-.5 5h-3.500l-.5-5-2-1-1 2.500Q2 14 1.500 9z" fill="#5583ae" stroke="#2f5275" />,
  chip: (<g><rect x="2" y="2" width="16" height="16" fill="none" stroke="#5b8ec4" strokeWidth="2" strokeDasharray="1.500 1.500" /><rect x="5" y="5" width="10" height="10" fill="#4d82bb" /></g>),
  stac: (<g fill="#f5f8fa" stroke="#8ea5ba"><rect x="2" y="2" width="11" height="11" /><rect x="4.500" y="4.500" width="11" height="11" /><rect x="7" y="7" width="11" height="11" /><circle cx="12.500" cy="12.500" r="3" /></g>),
  mssql: <path d="M2 2q12 1 17 9l-9 3-7 5q3-8-1-17" fill="#5685b5" stroke="#2e5580" />,
  oracle: <rect x="1.500" y="4" width="17" height="12" rx="5" fill="#5b8bbb" stroke="#2f5275" strokeWidth="1.500" />,
  wms: <Globe />,
  brush: (<g><path d="M19 2l-8 7" stroke="#c88a30" strokeWidth="3" /><path d="M7 7l6 5-3 3-6-5z" fill="#d33b36" /><path d="M5 9l6 6-3 3q-4-1-7-6z" fill="#ecc94c" stroke="#b08a2c" /></g>),
  addGroup: (<g fill="#f0f0f0" stroke="#888" strokeWidth="1.300"><path d="M8 2h8v13H8z" /><path d="M2.500 6h7v11h-7z" /><path d="M5.500 4h7v11h-7z" /><path d="M15.500 11.500v8M11.500 15.500h8" stroke="#5fa25f" strokeWidth="3" /></g>),
  eye: (<g><path d="M1 9q9-10 18 0-9 8-18 0" fill="#fff" stroke="#778" strokeWidth="1.300" /><circle cx="10" cy="9" r="4" fill="#4679ad" /><circle cx="10" cy="9" r="1.700" fill="#222" /><path d="M14 17h6l-3 3z" fill="#444" /></g>),
  epsilon: (
    <g>
      <text x="0" y="13" fontSize="21" fontStyle="italic" fill="#333" fontFamily="Liberation Serif, serif">ε</text>
      <path d="M11.500 18v-5q0-2 2-2h3q2 0 2 2v5" fill="none" stroke="#666" strokeWidth="1.800" />
    </g>
  ),
  ram: (<g><rect x="2" y="5" width="16" height="10" rx="2" fill="#fff" stroke="#888" strokeWidth="1.500" /><path d="M5 3v3M8.300 3v3M11.600 3v3M15 3v3M5 14v3M8.300 14v3M11.600 14v3M15 14v3" stroke="#888" strokeWidth="1.500" /></g>),
  search: (<g fill="none" stroke="#777" strokeWidth="1.700"><circle cx="8" cy="8" r="6" /><path d="M12.500 12.500l6 6" /></g>),
  searchDark: (<g fill="none" stroke="#333" strokeWidth="2.200"><circle cx="9" cy="9" r="6.500" /><path d="M13.500 13.500l5.500 5.500" /></g>),
  models: (
    <g>
      <path d="M7 0v14M0 7h14M2 2l10 10M12 2L2 12" stroke="#c0242f" strokeWidth="2.400" />
      <circle cx="7" cy="7" r="3.500" fill="#c0242f" />
      <circle cx="7" cy="7" r="1.200" fill="#f3d6d6" />
      <circle cx="14" cy="13" r="3.500" fill="#b9c3cd" stroke="#8a8f95" strokeDasharray="1.500 1" strokeWidth="2" />
      <path d="M15 17h6l-3 3z" fill="#333" />
    </g>
  ),
  doc: (<g><path d="M3.500 1.500h9l4 4v13h-13z" fill="#f8f8f8" stroke="#999" /><path d="M6 7h8M6 10h8M6 13h8M6 16h5" stroke="#999" strokeWidth="1.200" /></g>),
  note: (<g><rect x="2" y="2" width="13" height="12" fill="#f5e43c" stroke="#cbbd45" /><path d="M10 17l7-10 2 1.500L12 18z" fill="#d9c74c" stroke="#8b8030" /></g>),
  wrench: (<g><path d="M8 8l9 8" stroke="#888" strokeWidth="4.500" /><path d="M10.500 10.500l6.500 6" stroke="#e8dc7e" strokeWidth="3" /><path d="M1.500 4q0 5 4.500 5.500t5-4Q10 2 7 1.500V5L4.500 6z" fill="#bbb" stroke="#666" /></g>),
  qgis: <QLogo />,
  gdal: (
    <g>
      <path d="M5 9q0-7 6-8 5-.5 6 4l2 6H6z" fill="#3c8d9e" />
      <path d="M7 5q5-4 9 0" stroke="#1d4552" strokeWidth="2" fill="none" />
      <text x="-.5" y="19" fontSize="8.500" fontWeight="700" fill="#111" fontFamily="Open Sans, sans-serif" letterSpacing="-.3">GDAL</text>
    </g>
  ),
  grass: (<g fill="#e5f2e8" stroke="#5d9270"><path d="M10 1l8 8-8 9-8-9z" /><path d="M10 18V6M10 14L5 9M10 14l5-5M10 10L8 7M10 10l2-3" strokeWidth="1.600" /></g>),
  lock: (<g><path d="M5.500 9V6q0-4.500 4.500-4.500T14.500 6v3" fill="none" stroke="#777" strokeWidth="2.500" /><rect x="3" y="8.500" width="14" height="10" rx="1" fill="#666" /></g>),
  extents: (
    <g fill="none" stroke="#222" strokeWidth="1.600">
      <ellipse cx="6.500" cy="5" rx="4" ry="3.500" transform="rotate(-30 6.500 5)" />
      <ellipse cx="7.500" cy="11" rx="5" ry="3.500" transform="rotate(-30 7.500 11)" />
      <ellipse cx="13.500" cy="15" rx="4" ry="3.200" transform="rotate(-30 13.500 15)" />
      <path d="M4 17L17 2M8 18L19 6" />
    </g>
  ),
  crs: (<g fill="none" stroke="#555"><circle cx="10" cy="10" r="8.500" fill="#888" /><path d="M1 10h18M10 1v18M3 5h14M3 15h14" stroke="#ddd" /><ellipse cx="10" cy="10" rx="4.500" ry="8.500" stroke="#ddd" /></g>),
  bubble: <path d="M10 2q8.500 0 8.500 7 0 4-3 6l2 4-6-2.500Q1.500 17 1.500 9.500 1.500 2 10 2" fill="#5a5a5a" />,
};

const Icon = ({ name, size = 20 }: { name: string; size?: number }) => (
  <svg width={size} height={size} viewBox="0 0 20 20" overflow="visible">
    {icons[name]}
  </svg>
);

const Check = () => (
  <svg width="9" height="9" viewBox="0 0 9 9">
    <path d="M1.500 4.500L3.500 7.500 7.500 1.200" fill="none" stroke="#111" strokeWidth="1.500" />
  </svg>
);

const PanelButtons = () => (
  <>
    {["M4.500 3h3.500v3.500M3 4.500h3.500v3.500h-3.500z", "M3.200 3.200l4.600 4.600M7.800 3.200L3.200 7.800"].map((d, i) => (
      <svg key={d} width="10" height="10" viewBox="0 0 11 11">
        <rect x=".7" y=".7" width="9.600" height="9.600" rx="2" fill="#e8e8e8" stroke="#666" />
        <path d={d} fill="none" stroke="#555" strokeWidth={i ? 1.7 : 0.9} />
      </svg>
    ))}
  </>
);

/* ---------- toolbars ---------- */

// "|" handle, "/" separator, "v" drop arrow, "w" faded arrow, "*name" pressed, "-name" disabled
const fileTools =
  "newFile open save layout layoutManager style | *hand panSelection zoomIn zoomOut zoomFull zoomSelection zoomLayer -zoomNative zoomLast -zoomNext mapView view3d newBookmark bookmarks clock refresh | select v selectForm v deselect v selectPlace v | identify abacus *gear sigma table v measure v tip -action w";
const layerTools =
  "dataSource geopackage shapefile spatialite memory mesh virtual | -edits pencil -saveEdits -digitize w -addFeature -vertex w -attributes -trash -cut -copy -paste -undo -redo | labelYellow diagram / labelPin labelRed / -labelA -labelB -labelC -labelD -labelE | webAdd webSearch webFind | python | help |";

const renderTools = (tools: string) =>
  tools.split(" ").map((tool, i) => {
    if (tool === "|") return <Handle key={i} $width={13.4} />;
    if (tool === "/") return <Separator key={i} />;
    if (tool === "v" || tool === "w") return <DropArrow key={i} $faded={tool === "w"} />;
    const pressed = tool[0] === "*";
    const disabled = tool[0] === "-";
    return (
      <ToolButton key={i} $pressed={pressed} $disabled={disabled}>
        <Icon name={tool.replace(/^[*-]/, "")} size={20} />
      </ToolButton>
    );
  });

/* ---------- map ---------- */

type Sheet = [x: number, y: number];
const NW: Sheet = [380, 105];
const NE: Sheet = [600, 140];
const SW: Sheet = [380, 340];
const SE: Sheet = [600, 400];

// Sheet coordinates are thirds of a canvas pixel
const place = ([x, y]: Sheet, points: string) =>
  points
    .split(" ")
    .map((point) => {
      const [px, py] = point.split(",").map(Number);
      return `${(x + px / 3).toFixed(1)},${(y + py / 3).toFixed(1)}`;
    })
    .join(" ");

const outline = [
  place(
    NW,
    "26,690 50,662 72,635 80,630 110,600 116,582 122,565 130,563 132,568 150,562 158,552 152,535 158,520 172,511 188,520 193,530 193,540 198,549 228,535 258,547 262,540 255,515 247,495 247,480 258,455 262,440 258,410 280,392 340,388 350,378 346,367 368,355 388,350 397,370 400,350 408,345 405,330 460,306 470,288 485,284 500,262 508,250 515,215 527,200 550,192 548,188 556,184 540,182 545,168 555,172 565,165 580,138 595,133 610,125 615,105 628,88 630,72 636,60 645,50 642,40 650,33 665,36 680,35 688,45 700,38 712,50 717,80 724,195 718,210 705,228"
  ),
  place(
    NE,
    "64,128 64,135 85,143 110,149 128,148 130,138 140,135 152,100 158,92 155,75 162,62 175,52 205,52 212,62 212,75 222,72 230,68 242,76 246,92 258,106 298,106 302,95 325,100 302,132 308,150 318,152 320,160 330,165 326,172 300,178 275,190 270,205 278,208 295,208 300,220 304,235 294,238 291,275 310,265 330,250 355,248 356,241 373,241 376,230 372,222 395,205 417,190 417,212 435,213 438,317 452,318 455,332 500,350 497,433 565,442 562,508 585,512 583,528 578,535 584,548 582,560 577,570 579,582 625,608 690,652 712,697 695,715 675,722 680,772"
  ),
  place(
    SE,
    "720,15 640,88 597,160 595,250 587,270 582,292 602,317 595,392 692,475 725,545 784,702 740,726 715,690 717,682 708,680 700,670 680,655 668,637 655,618 635,622 625,614 612,615 600,608 583,605 575,597 567,572 567,550 572,545 562,530 575,525 573,502 565,495 570,485 556,490 557,483 570,478 568,460 560,448 550,442 535,440 545,435 532,425 535,418 525,402 515,402 500,405 495,398 502,388 497,375 515,372 525,345 518,340 535,325 500,303 480,270 470,240 462,235 445,220 430,212 415,210 418,200 422,195 412,190 400,188 395,182 385,184 380,176 370,178 365,170 350,170 340,165 320,155 290,140 285,127 265,130 262,142 245,138 230,145 225,157 205,157 203,145 170,145 120,160 115,180 105,195 112,200 100,215 98,240 92,252 60,235 50,238 10,250 5,262"
  ),
  place(
    SW,
    "660,440 650,440 648,460 638,470 635,495 620,498 617,510 620,520 628,522 632,545 635,570 640,573 637,600 642,610 640,650 635,673 625,675 622,650 618,610 585,605 560,615 545,620 525,640 500,645 465,652 435,655 420,662 405,672 402,650 400,628 388,610 388,590 403,560 420,545 418,525 400,500 392,450 388,440 402,420 400,400 405,375 395,350 388,335 382,315 375,307 335,303 275,325 268,323 210,345 182,367 165,355 140,343 90,350 65,358 62,335 43,320 45,312 70,312 68,300 74,290 58,280 45,262 48,250 75,238 100,235 100,228 60,225 35,215 35,205 62,200 75,206 82,195 125,180 130,172 112,162 112,150 122,143 110,135 62,132 52,120 58,112 80,110 87,103 78,97 38,72 28,30 24,0"
  ),
].join(" ");

const rivers: [Sheet, string[]][] = [
  [
    NW,
    [
      "717,75 705,100 690,128 670,140 640,152 625,153 615,162",
      "718,142 705,145 698,158 685,172",
      "645,48 660,45 675,38",
      "470,288 485,294 500,298 540,298 575,275 600,265 650,250 655,232 668,226 675,240 690,242 702,260 700,275 690,290 665,302 652,306 650,320 636,332 628,345 634,362 625,375 628,388 622,400 615,400",
      "702,270 725,270 750,272",
      "702,268 725,262 735,250",
      "470,290 465,315 480,322 486,355 470,375 468,400 455,425 452,450 442,465 450,480 453,495",
      "442,468 430,480 415,492 415,505",
      "452,430 430,432 425,440 405,448 395,460 383,485",
      "465,318 455,332 440,337",
      "350,380 362,400 365,430 360,450 345,470 350,500 358,520 360,548 338,558",
      "348,500 340,515 325,512 312,508",
      "262,440 265,458 275,460 285,463 292,470",
      "127,570 122,590 62,645 68,670 77,700 72,713 35,720",
      "72,715 50,735 40,748",
      "685,388 710,392 735,398 750,405",
      "175,750 185,735 185,715 195,692 210,690 210,682 225,670 245,662 270,652 290,650 315,645 330,645 340,630 340,612 365,612 385,590 405,572 430,568 440,560 465,558 480,562 500,550 500,535 525,540 530,532 560,525 578,515 583,500 600,510 620,522 650,512 670,510 678,525 690,532 710,530 720,520 750,515",
      "410,678 420,650 430,627 445,635 465,635 485,608 500,605 510,590 520,588 535,570 560,577 595,590 615,582 630,586 620,570 630,548 655,540 675,525",
      "355,615 353,640 342,655 340,690 355,700 355,715 345,720",
      "340,690 320,690 300,695",
      "150,565 155,578 165,595 165,615 172,625 170,635 180,658 165,662 165,675 148,680 150,690 140,712 130,720 130,735",
      "400,745 420,735 440,722 455,700 470,688 500,685 525,702 545,695 562,705 568,728 600,740 605,728 620,730 640,732 655,705 665,690 680,670 695,668 710,655 735,665 750,668",
      "385,730 405,728 425,732 440,720 425,706 410,702 400,705",
      "620,683 630,697 650,705",
      "725,490 735,505 750,508",
      "500,748 505,735 520,725 520,702",
    ],
  ],
  [
    NE,
    [
      "40,165 85,165 105,155 130,150 158,152 167,125 158,95",
      "72,160 75,142",
      "158,95 175,100 190,108 200,122",
      "165,95 185,98 202,72",
      "158,92 155,75 162,62",
      "158,152 165,168 190,172 195,190 180,205 165,235 155,250 148,290 135,296 110,298 85,300 70,290 25,285",
      "145,292 143,308 125,312 115,310 110,320 95,325 93,345 98,350 102,368",
      "185,170 215,172 225,190 230,220 235,230 248,255 262,265 295,278",
      "248,255 248,290 242,315 218,322 210,345",
      "290,298 288,315 294,325 292,335",
      "0,430 10,422 30,428 50,420 65,410 100,418 130,428 135,440 150,435 150,450 165,452 165,470 178,478 185,490 198,492 205,515 222,528 240,522 240,540 255,540 260,555 275,568 285,585 300,600 335,585 360,565 370,558 395,560 410,540 430,535 435,527 460,525 500,520 512,512 535,520 545,540 537,580 525,595 525,625 510,650 490,670 478,692",
      "0,405 12,405 15,420",
      "67,385 75,398 90,405 100,418",
      "205,442 218,445 228,470 237,490 230,525",
      "325,505 328,530 335,580",
      "372,508 375,535 382,555",
      "395,520 390,535 388,558",
      "540,585 560,600 570,625 590,637 600,628 650,628",
      "300,600 295,612 300,618 294,630 303,640 297,655 305,665 290,672 303,680 289,688 300,692 303,712 322,715 320,735 325,750 308,758 300,770 296,785 300,800",
      "170,585 178,600 178,630 195,640 210,655 240,655 255,665 270,690 280,700 275,712",
      "325,750 350,740 360,725 380,705 390,680 410,658 420,665 435,705",
      "385,690 395,702 410,730 430,755 450,738 475,708",
      "395,682 410,705",
      "325,750 350,755 355,765 380,768",
      "98,683 120,695 135,708 150,712 175,700 205,705 240,708 275,712 285,735 300,745 300,770",
      "242,708 240,725 235,740 240,760 238,780",
      "225,705 210,708 195,735 178,737",
      "0,590 10,570 20,565 28,568 50,550 60,560 75,558 85,570 98,572 100,590 110,595 112,610 125,615 118,628 125,640",
      "0,650 25,650 60,657 90,648 130,640 145,648 165,650 172,660 190,662 205,685 230,685 235,700 250,708",
      "15,655 15,680 8,690 0,692",
      "628,682 615,695 615,712 640,725 650,715 665,718 690,712 690,690 697,670",
      "615,718 600,730 590,738 575,740 587,745 580,760 585,782 595,785 615,800",
      "680,708 668,716 690,718",
      "483,767 495,775 510,785 515,800",
    ],
  ],
  [
    SW,
    [
      "88,98 110,95 135,75 155,75 170,87 185,85 215,80 220,87 232,80 232,70 255,65 270,62 280,72 285,95 295,118",
      "285,30 285,45 278,55 270,62",
      "62,115 120,120 150,130 180,143 215,142 220,125 232,132 270,122 285,125 300,112 310,122 325,120",
      "128,120 120,145",
      "125,165 165,150 190,150 218,142 230,130",
      "85,198 125,188 145,175 165,170 195,165 200,155 230,135",
      "138,202 155,203 180,185 190,170 215,158 235,142 250,128",
      "320,80 325,100 322,120 335,130 330,150 355,157",
      "345,85 350,95 365,100 372,130 385,155 385,180",
      "350,112 360,130 370,145",
      "405,108 412,140 408,160 415,180",
      "430,125 442,145 428,175 425,190",
      "468,135 475,155 475,190",
      "287,175 300,170 297,158 310,155 312,165 330,165 335,152 355,157 365,170 380,178 390,185 410,185 422,190 440,198 445,188 450,202 462,205 465,190 488,190 495,197 515,200 520,210 537,215",
      "320,185 340,183 355,170",
      "325,203 330,222 380,222 400,210 420,208 430,192",
      "250,218 258,230 282,240 305,240 325,232 325,240 350,240 380,250 400,240 410,255 435,242 438,260 450,235 455,250 460,235 490,238 500,228 530,220 545,230 560,225 570,235 585,240 580,262 592,245 610,262 625,285 645,315 660,330 672,342 672,362 688,375 715,368 725,395 740,415 755,420",
      "270,188 285,192 298,210 295,235",
      "70,275 120,270 190,272 220,270 250,275 255,265 275,262 290,248 285,235",
      "80,240 140,248 175,238 185,250 200,262 210,270",
      "75,320 115,318 150,306 200,310 230,305 225,292 240,285 250,290 280,265 290,260",
      "75,290 100,292 118,310 105,318",
      "80,345 100,335 115,318",
      "175,355 190,340 190,328 205,315 210,305 225,298",
      "255,262 255,290 248,318",
      "272,322 285,312 290,300 310,292 330,275 355,255 390,248",
      "310,298 340,290 350,282 370,265 405,272 420,255 432,250",
      "468,240 450,260 445,270 425,282 425,297 405,305 400,320 385,322",
      "430,290 442,300 440,315 430,330",
      "400,320 400,345 410,358",
      "465,325 490,300 505,278 490,275 465,268",
      "505,275 525,275 555,318 560,328 600,335 635,365 645,400 655,425 660,440",
      "555,322 545,332 520,345 480,360 475,375 450,390 430,410 408,440",
      "475,375 475,415",
      "550,330 555,345 548,362 525,375 505,385 498,402",
      "632,410 650,432",
      "400,488 415,487 430,497 445,485 450,470 440,445",
      "445,480 455,485 470,500 485,500 488,487 495,478 510,475 515,458 525,462 545,455 570,460 590,458 600,450 615,458 625,480 635,495",
      "458,455 470,465 490,465 500,450 520,438 540,438 550,455",
      "467,435 478,448 488,457",
      "565,460 560,480 550,490 520,508",
      "435,495 438,518 420,530 403,560 415,575 430,595 437,620",
      "475,500 480,525 472,545 460,550",
      "410,550 425,562 445,565",
      "465,600 490,578 520,565 540,550 580,520 590,498 615,495",
      "490,550 520,545 540,550 538,570 528,585",
      "508,597 520,597 530,605 540,620",
      "490,605 505,612 515,622 525,635",
      "600,607 608,595 620,590 640,590",
      "580,605 635,612",
      "388,590 388,612 400,628",
      "405,665 435,655 465,652 500,645 525,640 545,620 585,607",
      "620,635 638,637",
      "350,38 375,70 400,82 410,70 412,55 425,42 450,10",
      "440,65 450,62 465,55 480,32 500,25 520,5",
      "440,75 455,75 475,70 478,60 500,50 515,38 545,38 565,25 595,25 605,35 600,25 650,28 655,5",
      "455,97 475,82 490,80 510,62 530,45 550,40",
      "510,68 535,62 545,42",
      "562,72 575,72 595,45 600,35",
      "497,100 530,103 550,110 580,95 590,85 610,82 625,70 655,65 680,48 720,50 725,58 765,45 775,40 790,45 810,40",
      "672,58 675,75 670,92 650,95 638,103",
      "780,15 775,30 785,42",
      "757,85 770,95 785,97 808,112",
      "535,170 575,172 610,178 620,185 640,182 645,195 665,210 680,240 715,240 720,250 745,250 750,268 760,262 770,272 795,280 803,335",
      "645,180 660,180 670,195 665,210 650,208",
    ],
  ],
  [
    SE,
    [
      "0,10 8,30 12,45 10,62 45,65 75,65 90,78",
      "75,38 88,52 92,68 120,70 140,75 155,82 165,92 180,97 185,85 208,85 212,105 225,125 230,140",
      "100,32 130,35 145,42 150,65 165,72 180,82",
      "295,0 298,20 285,25 287,35 302,38 310,28 315,42 303,55 310,65 325,55 330,85 338,92 352,98",
      "285,60 300,75 330,92 350,102 358,115 372,120 382,130 382,172",
      "345,20 345,65 355,75 350,95",
      "312,135 340,152 378,165",
      "500,0 520,20 525,40 530,65 510,85 500,103 475,112 475,130 480,145",
      "535,30 535,55 528,70",
      "457,30 480,45 500,50 508,75 545,82 562,82 575,65",
      "425,190 450,170 490,150 510,132 550,127 580,137 595,158",
      "520,135 540,140 543,190",
      "557,130 578,165 580,195 575,215",
      "462,225 475,210 488,202",
      "470,240 490,228",
      "475,258 488,248 500,267 515,287",
      "583,0 610,15 625,38 635,60 638,85",
      "690,0 680,15 668,35 662,68",
      "525,402 565,385 575,368 597,358",
      "565,385 572,400 595,402",
      "632,432 645,445 655,465 655,482",
      "650,450 665,450 670,465",
      "568,572 602,545",
      "588,603 605,580 615,570 620,560 632,555 635,545 650,525 675,528 700,530 725,545",
      "610,612 620,600 630,585 640,590 635,600 620,610",
      "650,620 668,612",
      "715,672 730,635 755,625",
      "740,724 760,710 760,690 780,692",
      "430,212 440,195",
      "60,190 75,225 90,245",
      "72,203 85,210 105,203 98,235",
    ],
  ],
];

const MapView = () => (
  <svg width="872" height="554" viewBox="188 102 872 554">
    <g fill="#875094" stroke="#3a2540" strokeWidth="1" strokeLinejoin="round">
      <polygon points={outline} />
      <polygon points={place(SE, "68,266 80,262 86,275 90,285 85,295 72,297 67,285")} strokeWidth="1.300" />
      <polygon points={place(SE, "30,478 38,481 45,487 37,487")} />
      <polyline points={place(SE, "497,362 510,340 520,345")} strokeWidth="1.300" fill="none" />
      <ellipse cx="628.500" cy="463.500" rx="3" ry="1.600" fill="#fff" />
    </g>
    <g fill="none" stroke="#7f967d" strokeWidth="1.050" strokeLinejoin="round">
      {rivers.map(([sheet, lines]) => lines.map((line) => <polyline key={line} points={place(sheet, line)} />))}
    </g>
    <polyline points={place(NW, "340,388 280,392 258,410 262,440 258,455 247,480 247,495")} fill="none" stroke="#7f967d" />
  </svg>
);

/* ---------- panels ---------- */

const browserItems: [string, string, boolean][] = [
  ["star", "Favorites", false],
  ["bookmarks", "Spatial Bookmarks", true],
  ["home", "Home", true],
  ["folder", "C:\\ (Windows)", true],
  ["folder", "D:\\ (DATA)", true],
  ["folder", "E:\\ (New Volume)", true],
  ["box", "GeoPackage", false],
  ["feather", "SpatiaLite", false],
  ["elephant", "PostgreSQL", false],
  ["chip", "SAP HANA", false],
  ["stac", "STAC", false],
  ["mssql", "MS SQL Server", false],
  ["oracle", "Oracle", false],
  ["wms", "WMS/WMTS", false],
];

const toolGroups = [
  "Recently used",
  "3D Tiles",
  "Cartography",
  "Database",
  "File tools",
  "GPS",
  "Interpolation",
  "Layer tools",
  "Mesh",
  "Network analysis",
  "Plots",
  "Point cloud conversion",
  "Point cloud data management",
  "Point cloud extraction",
  "Raster analysis",
  "Raster creation",
  "Raster terrain analysis",
  "Raster tools",
  "Vector analysis",
  "Vector coverage",
  "Vector creation",
  "Vector general",
  "Vector geometry",
  "Vector overlay",
  "Vector selection",
  "Vector table",
  "Vector tiles",
  "GDAL",
  "GRASS",
];

const groupIcon: Record<string, string> = {
  "Recently used": "clock",
  GDAL: "gdal",
  GRASS: "grass",
};

const Browser = () => (
  <>
    <PanelHeader>
      <PanelTitle>Browser</PanelTitle>
      <PanelButtons />
    </PanelHeader>
    <PanelTools $left={3} $height={25}>
      {["addLayer", "refresh", "filter", "collapse", "info"].map((name) => (
        <PanelTool key={name} $width={20.8}>
          <Icon name={name} size={13} />
        </PanelTool>
      ))}
    </PanelTools>
    <BrowserBody>
      <Tree>
        {browserItems.map(([icon, label, closed]) => (
          <TreeRow key={label} $left={4.5} $toggle={11}>
            <Toggle $closed={closed} />
            <Icon name={icon} size={14} />
            <RowLabel>{label}</RowLabel>
          </TreeRow>
        ))}
      </Tree>
      <ScrollBar>
        <ScrollArrow />
        <ScrollThumb />
        <ScrollTrack />
        <ScrollArrow $down />
      </ScrollBar>
    </BrowserBody>
  </>
);

const Layers = () => (
  <>
    <PanelHeader>
      <PanelTitle>Layers</PanelTitle>
      <PanelButtons />
    </PanelHeader>
    <PanelTools $left={3} $height={25}>
      {["brush", "addGroup", "eye", "layerFilter", "epsilon"].map((name) => (
        <PanelTool key={name} $width={20.8}>
          <Icon name={name} size={13} />
        </PanelTool>
      ))}
      <DropArrow />
      {["expand", "collapse", "removeLayer"].map((name) => (
        <PanelTool key={name} $width={20.8}>
          <Icon name={name} size={13} />
        </PanelTool>
      ))}
    </PanelTools>
    <LayerList>
      {["SUNGAI_BAB7_PO", "Dissolved", "Balam"].map((name, i) => (
        <LayerRow key={name} $active={i === 1}>
          <CheckBox>
            <Check />
          </CheckBox>
          <Swatch $line={["#7d9a78", "#8fb673", undefined][i]} />
          <LayerName $active={i === 1}>{name}</LayerName>
          {i === 1 && <Icon name="ram" size={13} />}
        </LayerRow>
      ))}
    </LayerList>
  </>
);

const Toolbox = () => (
  <RightDock>
    <PanelHeader>
      <PanelTitle>Processing Toolbox</PanelTitle>
      <PanelButtons />
    </PanelHeader>
    <PanelTools $left={3} $height={26}>
      <PanelTool><Icon name="models" size={14} /></PanelTool>
      <PanelTool><Icon name="pythonSmall" size={14} /></PanelTool>
      <PanelTool><Icon name="clock" size={13} /></PanelTool>
      <PanelTool><Icon name="doc" size={13} /></PanelTool>
      <Separator $width={4.5} />
      <PanelTool><Icon name="note" size={14} /></PanelTool>
      <Separator $width={4.5} />
      <PanelTool><Icon name="wrench" size={14} /></PanelTool>
    </PanelTools>
    <SearchBox $height={17}>
      <Icon name="search" size={11} />
      Search...
    </SearchBox>
    <ToolTree>
      {toolGroups.map((label) => (
        <TreeRow key={label} $left={6} $toggle={13}>
          <Toggle $closed />
          <Icon name={groupIcon[label] ?? "qgis"} size={12} />
          <RowLabel $left={6}>{label}</RowLabel>
        </TreeRow>
      ))}
    </ToolTree>
  </RightDock>
);

const Status = () => (
  <StatusBar>
    <SearchBox $height={18} $width={167}>
      <Icon name="search" size={11} />
      Type to locate (Ctrl+K)
    </SearchBox>
    <Splitter $width={439} />
    <StatusText $width={47} $spacing={-0.6}>Coordinate</StatusText>
    <Field $width={95}>-5.3217°, 105.2453°</Field>
    <StatusCell $width={24}><Icon name="extents" size={14} /></StatusCell>
    <Splitter $width={4} />
    <StatusText $width={24}>Scale</StatusText>
    <Field $width={64}>
      1:119121
      <ComboArrow><DropArrow /></ComboArrow>
    </Field>
    <StatusCell $width={28}><Icon name="lock" size={13} /></StatusCell>
    <StatusText $width={40} $spacing={-0.6}>Magnifier</StatusText>
    <Field $width={67}>
      100%
      <Spin />
    </Field>
    <Splitter $width={8} />
    <StatusText $width={42}>Rotation</StatusText>
    <Field $width={67}>
      0.0 °
      <Spin />
    </Field>
    <Splitter $width={5} />
    <CheckBox><Check /></CheckBox>
    <StatusText $width={41} $spacing={-0.85}>Render</StatusText>
    <StatusCell $width={14}><Icon name="crs" size={12} /></StatusCell>
    <Splitter $width={1} />
    <StatusText $width={63} $spacing={-0.75}>EPSG:4326</StatusText>
    <StatusCell $width={14}><Icon name="bubble" size={14} /></StatusCell>
  </StatusBar>
);

/* ---------- taskbar ---------- */

const Drawing = ({ children }: { children: ReactNode }) => (
  <svg width="22" height="22" viewBox="0 0 22 22" overflow="visible">
    {children}
  </svg>
);

const apps: { mark?: string; active?: boolean; badge?: string; art: ReactNode }[] = [
  {
    art: (
      <g>
        <rect x="7" y="1" width="13" height="13" fill="#fff" opacity=".8" />
        <rect x="3" y="5" width="15" height="14" fill="#2b2b2b" />
        <rect x="8" y="5" width="10" height="9" fill="#bcbcbc" />
      </g>
    ),
  },
  {
    mark: "#838383",
    badge: "99+",
    art: (
      <g>
        <path d="M2 20l1.500-5a8.500 8.500 0 1 1 3.500 3.500z" fill="#f5fff8" stroke="#25a75b" strokeWidth="2.200" />
        <path d="M7.500 7q1-1 1.800.5L10 9l-1 1q1 2.500 3.500 3.500l1-1.200 2 1q.5 2-2.500 2.200-5-1.500-6-6z" fill="#25a75b" />
      </g>
    ),
  },
  {
    mark: "#838383",
    art: (
      <g>
        <path d="M1 2h7l2 2.500h11V20H1z" fill="#e0a526" />
        <path d="M1 6h20v14H1z" fill="#fbcf4b" />
        <path d="M4 14h14v5H4z" fill="#2376bf" />
        <path d="M7 17h8v2H7z" fill="#6db5e8" />
      </g>
    ),
  },
  {
    art: (
      <g>
        <circle cx="11" cy="11" r="10" fill="#1b7fc4" />
        <path d="M1.500 9Q4 0 12 1q9 1 9 9 0 4-4.500 4.500Q12 14.500 13 12q1-5-4-5.500-5-.3-7.500 2.500" fill="#4ec68c" />
        <path d="M2 9q5-4 8 0-3 2-2 6t7 5.500q-6 2-10.500-2T2 9" fill="#1565b0" />
        <path d="M10.500 9.500q-1 4 1.500 6t6 .5q-3 3-6.500 1.500T9 12z" fill="#eef3f6" />
      </g>
    ),
  },
  {
    art: (
      <g>
        <circle cx="11" cy="12" r="9.500" fill="#e5473a" />
        <path d="M2.500 8L9 18l2 3.500Q2 21 1.500 12z" fill="#38a153" />
        <path d="M11 21.500L16 12l-2-4h6q2 8-4 12-2 1.500-5 1.500" fill="#f8c934" />
        <circle cx="11" cy="12" r="4.800" fill="#fff" />
        <circle cx="11" cy="12" r="3.700" fill="#3b7de0" />
        <circle cx="16.500" cy="5.500" r="5" fill="#8c42b8" />
        <text x="14" y="8" fontSize="7" fill="#fff" fontFamily="Open Sans, sans-serif">w</text>
      </g>
    ),
  },
  {
    art: (
      <g>
        <path d="M5 6l8-5 8 6v13H5z" fill="#1a66b8" />
        <path d="M7 5h11v8H7z" fill="#58b6ef" />
        <path d="M5 11l9 5 7-6v10H5z" fill="#2f93dc" />
        <rect x="1" y="8" width="10" height="10" rx="1" fill="#0f5aa5" />
        <circle cx="6" cy="13" r="2.700" fill="none" stroke="#fff" strokeWidth="1.500" />
      </g>
    ),
  },
  {
    art: (
      <g>
        <path d="M6 2h7q2 0 3 4l-5 9q-2 5-5 3-6-1-4-7Q3 3 6 2" fill="#2b86d8" />
        <path d="M1.500 12q1 4 5 3l4.500-6-2 9q-3 2-6 0-2-3-1.500-6" fill="#f0a33f" />
        <path d="M16 20H9l3-5q1-6 3-8 3-2 5 0 2 2 0 7-1 5-4 6" fill="#e76b9d" />
        <path d="M6 15l3-8q2-2 4 0l-2 8-2 5H7q-2-2-1-5" fill="#f7f3f1" />
        <path d="M12 2q4 0 4 4h2q3 0 3 3-2-2-4-1l-4 1z" fill="#7c63d8" />
      </g>
    ),
  },
  {
    art: (
      <g>
        <rect x="1" y="1" width="20" height="20" fill="#26357f" />
        <path d="M1 1h20v7L10 21H1z" fill="#7b2377" />
        <path d="M1 1h14L1 17z" fill="#c6264f" />
        <path d="M7 16q-3-3-2-7 2-4 6-4t6 4q1 4-2 7" fill="none" stroke="#e4cfe8" strokeWidth="1.500" />
        <path d="M9 18v-5q-2-5 2.500-5t2.500 4q-1 2-2.500 1.500V18z" fill="none" stroke="#e4cfe8" strokeWidth="1.300" />
      </g>
    ),
  },
  {
    art: (
      <g>
        <rect x="1" y="1" width="20" height="20" rx="2" fill="#16801b" />
        <circle cx="11" cy="11" r="8.500" fill="#fff" />
        <path d="M5 18Q7 11 11 8q4 3 6 10M6 3.500q3-.5 5 2 2-2.500 5-2" fill="none" stroke="#16801b" strokeWidth="2.300" />
      </g>
    ),
  },
  {
    art: (
      <g>
        <defs>
          <linearGradient id="insta" x1="0" y1="1" x2="1" y2="0">
            <stop offset="0" stopColor="#fcb045" />
            <stop offset=".5" stopColor="#e1306c" />
            <stop offset="1" stopColor="#833ab4" />
          </linearGradient>
        </defs>
        <rect x="1" y="1" width="20" height="20" rx="5" fill="url(#insta)" />
        <rect x="4.500" y="4.500" width="13" height="13" rx="4" fill="none" stroke="#fff" strokeWidth="1.500" />
        <circle cx="11" cy="11" r="3.200" fill="none" stroke="#fff" strokeWidth="1.500" />
        <circle cx="14.800" cy="7.200" r="1" fill="#fff" />
      </g>
    ),
  },
  {
    art: (
      <g>
        <circle cx="10.500" cy="10.500" r="9" fill="#175b80" stroke="#1f3f50" />
        <path d="M4 7q4-5 8-4l1 3-4 3-1 4-4-2zM13 12l4-2-1 6-3 1z" fill="#65ad58" />
        <circle cx="12" cy="10" r="5" fill="#b5ddea" fillOpacity=".8" stroke="#222" />
        <path d="M15 14l6 6" stroke="#222" strokeWidth="2.600" />
      </g>
    ),
  },
  {
    mark: "#838383",
    art: (
      <g transform="scale(1.100)">
        <QLogo />
      </g>
    ),
  },
  {
    mark: "#1475bd",
    active: true,
    art: (
      <g>
        <rect x="3" y="2" width="10" height="10" fill="#eee" stroke="#c9343a" strokeWidth="2" strokeDasharray="2 1.500" />
        <path d="M14 3v13M8 12h10" stroke="#7b8a96" strokeWidth="1.600" />
        <circle cx="12.500" cy="18" r="2.300" fill="none" stroke="#5eaad8" strokeWidth="1.500" />
        <circle cx="19.500" cy="12.500" r="2.300" fill="none" stroke="#5eaad8" strokeWidth="1.500" />
      </g>
    ),
  },
];

const Taskbar = () => (
  <TaskBar>
    <Weather>
      <svg width="25" height="26" viewBox="0 0 25 26">
        <path d="M2 16Q3 7 11 7t10 8q-3-2-5 0-3-2-5 0-3-2-9 1" fill="#7ab3e6" />
        <path d="M11 15v7q-2 3-4 0" fill="none" stroke="#555" strokeWidth="1.600" />
        <circle cx="17.500" cy="6.500" r="6.500" fill="#b3202b" />
        <text x="15" y="10" fontSize="9.500" fill="#fff" fontFamily="Open Sans, sans-serif">1</text>
      </svg>
      <WeatherText>
        <span>Light rain</span>
        <span>At night</span>
      </WeatherText>
    </Weather>
    <TaskCell>
      <Drawing>
        <path d="M1.500 1.500h9v9h-9zM11.500 1.500h9v9h-9zM1.500 11.500h9v9h-9zM11.500 11.500h9v9h-9z" fill="#1788d4" />
        <path d="M1.500 1.500h9v9h-9z" fill="#33a9e6" />
      </Drawing>
    </TaskCell>
    <TaskSearch>
      <Icon name="searchDark" size={13} />
      <span>Search</span>
      <svg width="42" height="20" viewBox="0 0 42 20">
        <path d="M3 17Q0 8 5 7q4 0 6 6 1-8 6-8t6 8q2-6 6-6 5 2 3 10M8 11q8-12 18 0" fill="none" stroke="#a9a4a9" strokeWidth="1.600" />
        <g fill="#b32247">
          <circle cx="4" cy="13" r="1.500" /><circle cx="10.500" cy="12" r="1.500" /><circle cx="17" cy="11" r="2.200" /><circle cx="23" cy="12" r="1.500" /><circle cx="30" cy="13" r="1.500" />
        </g>
        <circle cx="36" cy="4" r="3" fill="#eab93c" />
        <circle cx="39" cy="10" r="2.800" fill="#d33f79" />
        <circle cx="34.500" cy="13" r="2.500" fill="#f0c548" />
        <path d="M36 8l1 10 2-7" stroke="#c66" fill="none" strokeWidth=".7" />
      </svg>
    </TaskSearch>
    {apps.map((app, i) => (
      <TaskCell key={i} $active={app.active} $mark={app.mark}>
        <Drawing>{app.art}</Drawing>
        {app.badge && <Badge>{app.badge}</Badge>}
      </TaskCell>
    ))}
    <Tray>
      <TrayCell $width={27}>
        <svg width="10" height="7" viewBox="0 0 10 7"><path d="M1 5.500l4-4 4 4" fill="none" stroke="#333" strokeWidth="1.400" /></svg>
      </TrayCell>
      <TrayCell $width={27}>
        <svg width="15" height="14" viewBox="0 0 15 14">
          <path d="M3 10q-3-4 1-5.500 2-4 6-1.500 4 0 3.500 4" fill="#ccc" stroke="#666" />
          <circle cx="10" cy="9.500" r="4" fill="#c32131" />
          <path d="M8.500 8l3 3M11.500 8l-3 3" stroke="#fff" />
        </svg>
      </TrayCell>
      <TrayCell $width={26}>
        <svg width="10" height="15" viewBox="0 0 10 15">
          <rect x="3" y="1" width="4" height="8" rx="2" fill="#5d9bd3" stroke="#3c72a5" />
          <path d="M1 6.500q0 5 4 5t4-5M5 11.500V14.500" fill="none" stroke="#4b79a5" strokeWidth="1.200" />
        </svg>
      </TrayCell>
      <TrayCell $width={37}>IND</TrayCell>
      <TrayCell $width={25}>
        <svg width="14" height="12" viewBox="0 0 14 12" fill="none" stroke="#333" strokeWidth="1.200">
          <path d="M1 4.500q6-6 12 0M3 7q4-4 8 0M5 9q2-2 4 0" />
          <circle cx="7" cy="10.300" r=".8" fill="#333" />
        </svg>
      </TrayCell>
      <TrayCell $width={15}>
        <svg width="13" height="12" viewBox="0 0 13 12" fill="none" stroke="#444">
          <path d="M1 4.500h2L6.500 1.500v9L3 7.500H1z" />
          <path d="M8.500 4q1.500 2 0 4" />
          <path d="M10.500 2.500q3 3.500 0 7" stroke="#bbb" />
        </svg>
      </TrayCell>
      <TrayCell $width={27}>
        <svg width="15" height="12" viewBox="0 0 15 12">
          <rect x="4" y="3" width="9" height="7" rx="1" fill="#444" stroke="#222" />
          <path d="M13.500 5v3" stroke="#222" strokeWidth="1.500" />
          <path d="M1 1.500h5v4q0 2-2.500 2T1 5.500zM3 7v4" fill="#222" stroke="#222" />
          <path d="M10 3.500l-2 3h2l-1 3" stroke="#fff" fill="none" />
        </svg>
      </TrayCell>
      <Clock>
        5:34 PM
        <br />
        11/12/2025
      </Clock>
      <svg width="13" height="14" viewBox="0 0 13 14">
        <path d="M1 11l1.500-2V5Q3 2 6.500 2T10.500 5v4l1.500 2z" fill="#222" />
        <path d="M5 12.500h3" stroke="#222" strokeWidth="1.500" />
        <path d="M5 5h2.500L5 8h3" stroke="#eee" fill="none" strokeWidth=".8" />
        <path d="M9.500 1H12L9.500 4H12" stroke="#222" fill="none" strokeWidth=".9" />
      </svg>
    </Tray>
  </TaskBar>
);

// "_" stands before the underlined letter
const menus: [string, number][] = [
  ["Pro_ject", 43],
  ["_Edit", 29],
  ["_View", 33],
  ["_Layer", 35],
  ["_Settings", 48],
  ["_Plugins", 44],
  ["Vect_or", 40],
  ["_Raster", 40],
  ["_Database", 53],
  ["_Web", 32],
  ["_Mesh", 36],
  ["Pro_cessing", 59],
  ["_Help", 30],
];

function App() {
  return (
    <Screen>
      <GlobalStyle />
      <TitleBar>
        <Icon name="qgis" size={13} />
        <WindowTitle>*Untitled Project — QGIS</WindowTitle>
        <WindowButtons>
          {["M1.500 5.500h7", "M1.500 4q0-1 1-1H7q1 0 1 1v4.500q0 1-1 1H2.500q-1 0-1-1zM4 1.500h5q1 0 1 1V7", "M2 2l7 7M9 2l-7 7"].map((d) => (
            <svg key={d} width="13" height="11" viewBox="0 0 11 11">
              <path d={d} fill="none" stroke="#8b8b8b" strokeWidth=".9" />
            </svg>
          ))}
        </WindowButtons>
      </TitleBar>
      <MenuBar>
        {menus.map(([label, width]) => {
          const [before, after] = label.split("_");
          return (
            <MenuItem key={label} $width={width}>
              {before}
              <u>{after[0]}</u>
              {after.slice(1)}
            </MenuItem>
          );
        })}
      </MenuBar>
      <Toolbar $height={32}>
        <Handle $width={7.6} />
        {renderTools(fileTools)}
      </Toolbar>
      <Toolbar $height={33}>
        <Handle $width={7.6} />
        {renderTools(layerTools)}
      </Toolbar>
      <Workspace>
        <LeftDock>
          <Browser />
          <DockGrip />
          <Layers />
        </LeftDock>
        <Splitter $width={5} />
        <Canvas>
          <MapView />
        </Canvas>
        <Splitter $width={6} />
        <Toolbox />
      </Workspace>
      <Status />
      <Taskbar />
      <Pointer>
        <svg width="9" height="14" viewBox="0 0 9 14">
          <path d="M1 1v10l2.300-2 1.700 4 1.500-.7L5 8.500h3z" fill="#fff" stroke="#333" strokeWidth=".9" />
        </svg>
      </Pointer>
    </Screen>
  );
}

export default App;
